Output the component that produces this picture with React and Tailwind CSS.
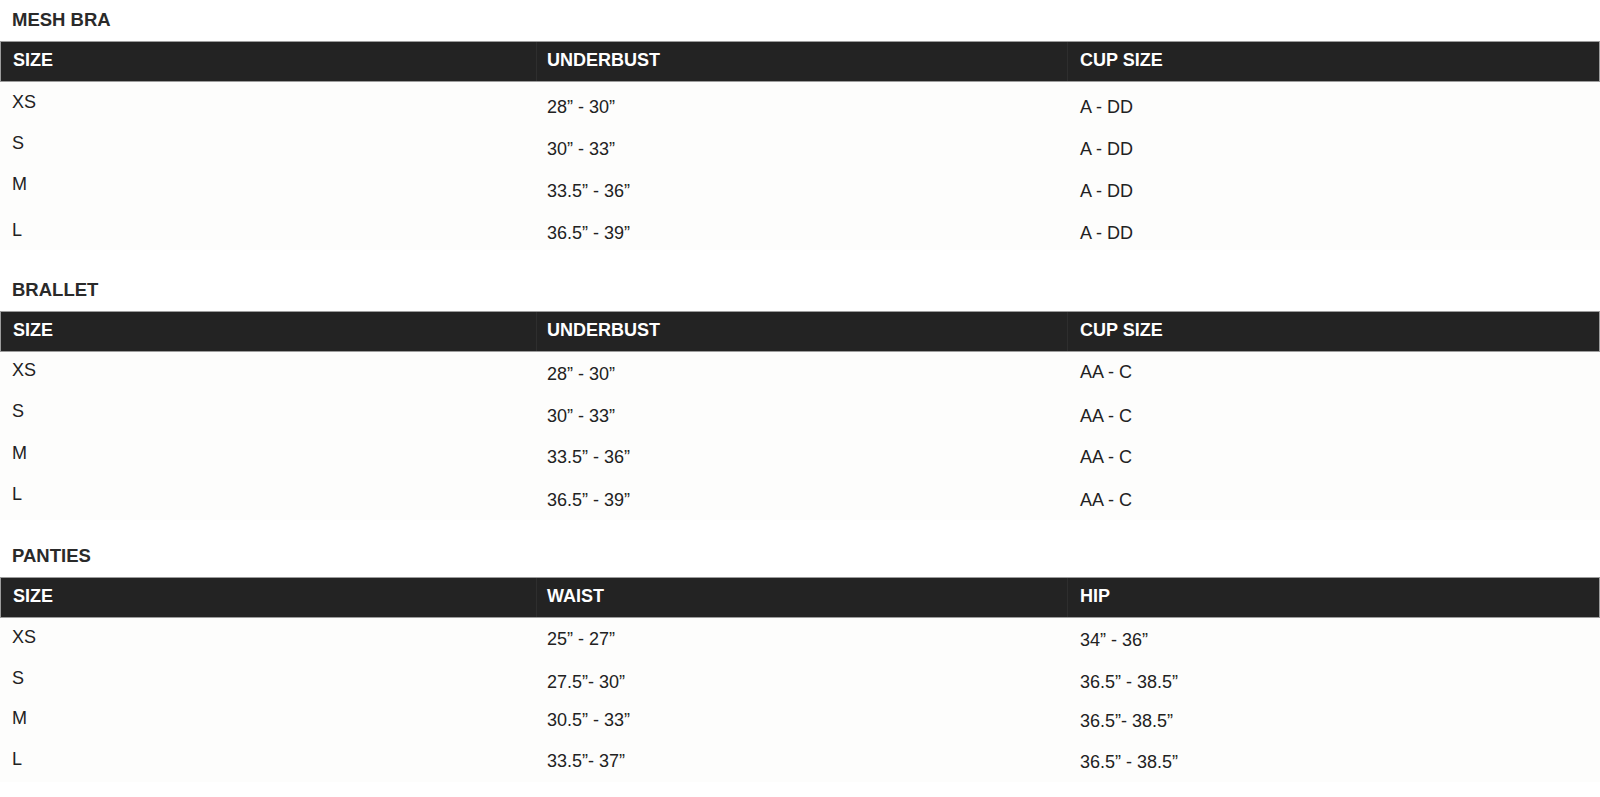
import React from "react";

const SHIFT = {
  "-5": "pb-[10px]",
  "-4": "pb-[8px]",
  "-3": "pb-[6px]",
  "-2": "pb-[4px]",
  "-1": "pb-[2px]",
  "0": "",
  "1": "pt-[2px]",
  "2": "pt-[4px]",
  "3": "pt-[6px]",
  "4": "pt-[8px]",
};

const sections = [
  {
    title: "MESH BRA",
    wrap: "",
    rowH: "h-[42px]",
    heads: ["SIZE", "UNDERBUST", "CUP SIZE"],
    rows: [
      ["XS", "28” - 30”", "A - DD"],
      ["S", "30” - 33”", "A - DD"],
      ["M", "33.5” - 36”", "A - DD"],
      ["L", "36.5” - 39”", "A - DD"],
    ],
    shifts: [
      [-1, 4, 4],
      [-2, 4, 4],
      [-3, 4, 4],
      [1, 4, 4],
    ],
  },
  {
    title: "BRALLET",
    wrap: "mt-[20px]",
    rowH: "h-[42px]",
    heads: ["SIZE", "UNDERBUST", "CUP SIZE"],
    rows: [
      ["XS", "28” - 30”", "AA - C"],
      ["S", "30” - 33”", "AA - C"],
      ["M", "33.5” - 36”", "AA - C"],
      ["L", "36.5” - 39”", "AA - C"],
    ],
    shifts: [
      [-3, 1, -1],
      [-4, 1, 1],
      [-4, 0, 0],
      [-5, 1, 1],
    ],
  },
  {
    title: "PANTIES",
    wrap: "mt-[16px]",
    rowH: "h-[41px]",
    heads: ["SIZE", "WAIST", "HIP"],
    rows: [
      ["XS", "25” - 27”", "34” - 36”"],
      ["S", "27.5”- 30”", "36.5” - 38.5”"],
      ["M", "30.5” - 33”", "36.5”- 38.5”"],
      ["L", "33.5”- 37”", "36.5” - 38.5”"],
    ],
    shifts: [
      [-2, 0, 1],
      [-2, 2, 2],
      [-3, -1, 0],
      [-3, -1, 0],
    ],
  },
];

const COLS = "grid grid-cols-[535px_531px_534px]";
const PADS = ["pl-[12px]", "pl-[12px]", "pl-[14px]"];
const HPADS = ["pl-[12px]", "pl-[10px]", "pl-[12px]"];

function Section({ s }) {
  return (
    <section className={s.wrap}>
      <h2 className="h-[41px] flex items-center px-[12px] text-[18.5px] font-bold text-[#2a2a2a] leading-none">
        {s.title}
      </h2>
      <div className={`${COLS} h-[41px] bg-[#232323] border border-[#9c9c9c]`}>
        {s.heads.map((h, i) => (
          <div
            key={i}
            className={`flex items-center pb-[3px] ${HPADS[i]} text-[18px] font-bold text-white leading-none ${
              i > 0 ? "border-l border-[#2e2e2e]" : ""
            }`}
          >
            {h}
          </div>
        ))}
      </div>
      <div className="bg-[#fdfdfc]">
        {s.rows.map((r, ri) => (
          <div key={ri} className={`${COLS} ${s.rowH}`}>
            {r.map((c, ci) => (
              <div
                key={ci}
                className={`flex items-center ${PADS[ci]} ${SHIFT[String(s.shifts[ri][ci])]} text-[18px] text-[#222] leading-none`}
              >
                {c}
              </div>
            ))}
          </div>
        ))}
      </div>
    </section>
  );
}

export default function App() {
  return (
    <div className="w-[1600px] min-h-[797px] bg-white font-['Liberation_Sans',Arial,sans-serif]">
      {sections.map((s, i) => (
        <Section key={i} s={s} />
      ))}
    </div>
  );
}
